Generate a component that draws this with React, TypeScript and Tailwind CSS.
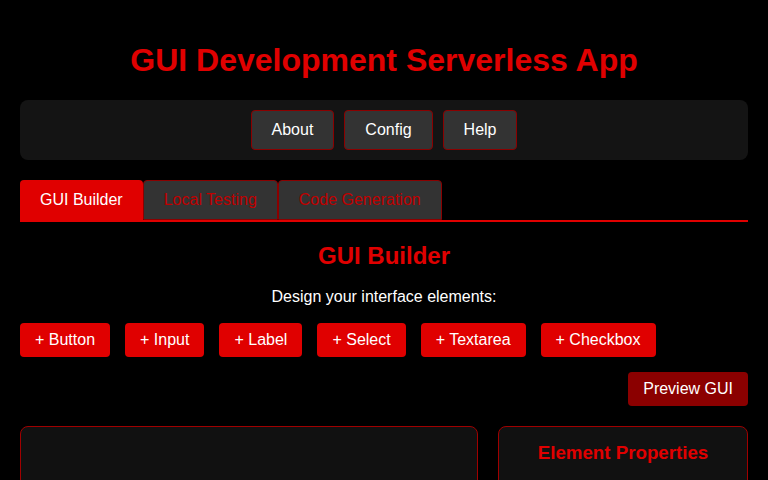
export default function App() {
  const elements = ["Button", "Input", "Label", "Select", "Textarea", "Checkbox"];
  return (
    <div className="min-h-screen bg-black p-5 text-white font-['Liberation_Sans',Arial,sans-serif]">
      <h1 className="my-[21px] pt-px text-center text-[32px] font-bold leading-[37px] text-[#e00000]">
        GUI Development Serverless App
      </h1>
      <nav className="flex justify-center gap-2.5 rounded-lg bg-[#141414] p-2.5">
        {["About", "Config", "Help"].map((n) => (
          <button
            key={n}
            className="rounded border border-[#8b0000] bg-[#333] px-5 py-2.5 text-base leading-[18px] text-white"
          >
            {n}
          </button>
        ))}
      </nav>
      <div className="mt-5 flex border-b-2 border-[#e00000]">
        <button className="rounded-t bg-[#e00000] px-5 py-[11px] text-base leading-[18px] text-white">
          GUI Builder
        </button>
        {["Local Testing", "Code Generation"].map((t) => (
          <button
            key={t}
            className="rounded-t border border-[#8b0000] bg-[#333] px-5 py-2.5 text-base leading-[18px] text-[#c00000]"
          >
            {t}
          </button>
        ))}
      </div>
      <h2 className="mt-5 text-center text-2xl font-bold leading-7 text-[#e00000]">GUI Builder</h2>
      <p className="mt-[18px] text-center text-base leading-[18px]">Design your interface elements:</p>
      <div className="mt-[17px] flex gap-[15px]">
        {elements.map((e) => (
          <button
            key={e}
            className="rounded bg-[#e00000] px-[15px] py-2 text-base leading-[18px] text-white"
          >
            + {e}
          </button>
        ))}
      </div>
      <div className="mt-[15px] flex justify-end">
        <button className="rounded bg-[#8b0000] px-[15px] py-2 text-base leading-[18px] text-white">
          Preview GUI
        </button>
      </div>
      <div className="mt-5 flex gap-5">
        <div className="h-[200px] flex-1 rounded-lg border border-[#a00000] bg-[#111]"></div>
        <div className="h-[200px] w-[250px] rounded-lg border border-[#a00000] bg-[#111] p-[15px]">
          <h3 className="text-center text-[18.72px] font-bold leading-[22px] text-[#e00000]">
            Element Properties
          </h3>
        </div>
      </div>
    </div>
  );
}
